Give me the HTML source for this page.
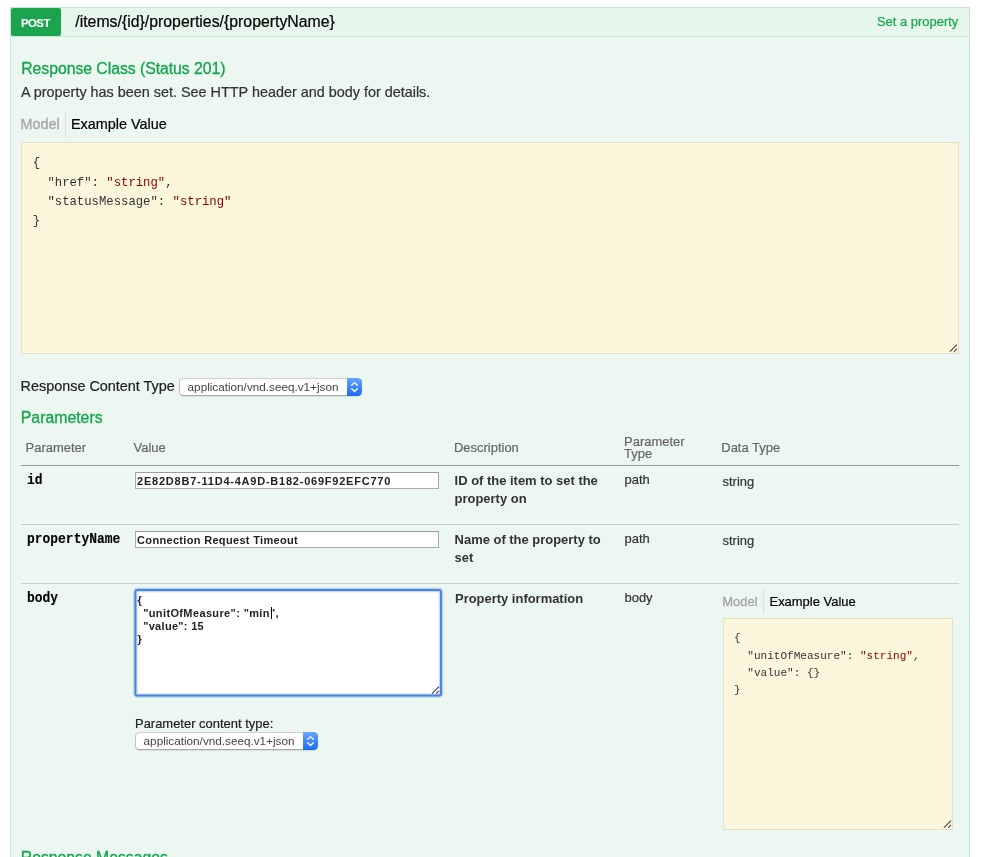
<!DOCTYPE html>
<html>
<head>
<meta charset="utf-8">
<title>Swagger UI</title>
<style>
html,body{margin:0;padding:0;background:#fff;}
body{width:982px;height:857px;overflow:hidden;position:relative;font-family:"Liberation Sans",sans-serif;line-height:1;}
.t{position:absolute;white-space:pre;line-height:1;-webkit-text-stroke-width:0.2px;}
#wrap{position:absolute;left:0;top:0;width:982px;height:857px;overflow:hidden;will-change:transform;}
.s{font-family:"Liberation Sans",sans-serif;}
.m{font-family:"Liberation Mono",monospace;}
.b{position:absolute;box-sizing:border-box;}
.str{color:#800;}
.sel{position:absolute;box-sizing:border-box;width:183px;height:18px;border:1px solid #c2c2c2;border-top-color:#cfcfcf;border-bottom-color:#a9a9a9;border-radius:4.5px;background:#fff;box-shadow:0 0.5px 1px rgba(0,0,0,0.10);}
.selbtn{position:absolute;right:-1px;top:-1px;width:15px;height:18px;border-radius:0 4.5px 4.5px 0;background:linear-gradient(#68a6fa,#1a6cf6);}
.selbtn svg{display:block;}
</style>
</head>
<body>
<div id="wrap">
<div class="b" style="left:10px;top:7px;width:960px;height:30px;border:1px solid #c3e8d1;background:#e7f6ec;"></div>
<div class="b" style="left:10px;top:37px;width:960px;height:863px;border:1px solid #c3e8d1;border-top:none;background:#ebf7f0;"></div>
<div class="b" style="left:11px;top:8px;width:50px;height:28px;background:#1ba34e;border-radius:2px;"></div>
<div class="t s" style="top:18px;font-size:11.4px;color:#fff;left:0.00px;font-weight:bold;letter-spacing:-0.5px;-webkit-text-stroke-width:0.1px;width:50px;text-align:center;left:10.4px;">POST</div>
<div class="t s" style="top:14px;font-size:15.84px;color:#000;left:75.30px;">/items/{id}/properties/{propertyName}</div>
<div class="t s" style="top:16px;font-size:12.96px;color:#15a44c;right:23.70px;">Set a property</div>
<div class="t s" style="top:61px;font-size:15.84px;color:#15a44c;left:21.20px;letter-spacing:-0.06px;-webkit-text-stroke-width:0.3px;">Response Class (Status 201)</div>
<div class="t s" style="top:85px;font-size:14.4px;color:#333;left:21.00px;">A property has been set. See HTTP header and body for details.</div>
<div class="t s" style="top:117px;font-size:14.4px;color:#a6a6a6;left:20.40px;-webkit-text-stroke-width:0.3px;">Model</div>
<div class="b" style="left:65px;top:112px;width:1px;height:25px;background:#ddd;"></div>
<div class="t s" style="top:117px;font-size:14.4px;color:#000;left:71.00px;">Example Value</div>
<div class="b" style="left:21px;top:142px;width:938px;height:212px;border:1px solid #e5e0c6;background:#fcf6dc;"></div>
<div class="t m" style="top:157px;font-size:12.28px;color:#333;left:32.70px;-webkit-text-stroke-width:0px;transform:scaleY(1.07);transform-origin:0 9px;">{</div>
<div class="t m" style="top:177px;font-size:12.28px;color:#333;left:32.70px;-webkit-text-stroke-width:0px;transform:scaleY(1.07);transform-origin:0 9px;">  "href": <span class="str">"string"</span>,</div>
<div class="t m" style="top:196px;font-size:12.28px;color:#333;left:32.70px;-webkit-text-stroke-width:0px;transform:scaleY(1.07);transform-origin:0 9px;">  "statusMessage": <span class="str">"string"</span></div>
<div class="t m" style="top:215px;font-size:12.28px;color:#333;left:32.70px;-webkit-text-stroke-width:0px;transform:scaleY(1.07);transform-origin:0 9px;">}</div>
<svg class="b" style="left:948px;top:343px" width="10" height="10"><path d="M1.9 8.7L9 1.6M6.1 8.7L9 5.8" stroke="#444" stroke-width="1.1" fill="none"/></svg>
<div class="t s" style="top:379px;font-size:14.4px;color:#222;left:20.60px;">Response Content Type</div>
<div class="sel" style="left:179px;top:378px;"><div class="selbtn"><svg width="15" height="18" viewBox="0 0 15 18"><path d="M4.7 7.3L7.5 4.6L10.3 7.3M4.7 10.8L7.5 13.5L10.3 10.8" stroke="#fff" stroke-width="1.3" fill="none" stroke-linecap="round" stroke-linejoin="round"/></svg></div></div>
<div class="t s" style="top:381px;font-size:11.73px;color:#444;left:187.60px;-webkit-text-stroke-width:0px;">application/vnd.seeq.v1+json</div>
<div class="t s" style="top:410px;font-size:15.84px;color:#15a44c;left:20.80px;-webkit-text-stroke-width:0.3px;">Parameters</div>
<div class="t s" style="top:442px;font-size:12.96px;color:#666;left:25.60px;">Parameter</div>
<div class="t s" style="top:442px;font-size:12.96px;color:#666;left:133.60px;">Value</div>
<div class="t s" style="top:442px;font-size:12.96px;color:#666;left:454.00px;">Description</div>
<div class="t s" style="top:436px;font-size:12.96px;color:#666;left:624.10px;">Parameter</div>
<div class="t s" style="top:448px;font-size:12.96px;color:#666;left:624.10px;">Type</div>
<div class="t s" style="top:442px;font-size:12.96px;color:#666;left:721.30px;">Data Type</div>
<div class="b" style="left:21px;top:465px;width:938px;height:1px;background:#999;"></div>
<div class="t m" style="top:475px;font-size:12.96px;color:#000;left:27.00px;font-weight:bold;-webkit-text-stroke-width:0.1px;transform:scaleY(1.1);transform-origin:0 9px;">id</div>
<div class="b" style="left:135px;top:472px;width:304px;height:17px;border:1px solid #aaa;border-top-color:#9c9c9c;background:#fff;"></div>
<div class="t s" style="top:476px;font-size:11px;color:#222;left:137.10px;font-weight:bold;letter-spacing:0.77px;-webkit-text-stroke-width:0px;">2E82D8B7-11D4-4A9D-B182-069F92EFC770</div>
<div class="t s" style="top:475px;font-size:12.96px;color:#333;left:454.60px;font-weight:bold;-webkit-text-stroke-width:0px;">ID of the item to set the</div>
<div class="t s" style="top:493px;font-size:12.96px;color:#333;left:454.60px;font-weight:bold;-webkit-text-stroke-width:0px;">property on</div>
<div class="t s" style="top:474px;font-size:12.96px;color:#333;left:624.50px;">path</div>
<div class="t s" style="top:476px;font-size:12.96px;color:#333;left:722.50px;">string</div>
<div class="b" style="left:21px;top:524px;width:938px;height:1px;background:#ccc;"></div>
<div class="t m" style="top:534px;font-size:12.96px;color:#000;left:27.00px;font-weight:bold;-webkit-text-stroke-width:0.1px;transform:scaleY(1.1);transform-origin:0 9px;">propertyName</div>
<div class="b" style="left:135px;top:531px;width:304px;height:17px;border:1px solid #aaa;border-top-color:#9c9c9c;background:#fff;"></div>
<div class="t s" style="top:535px;font-size:11px;color:#222;left:137.10px;font-weight:bold;letter-spacing:0.32px;-webkit-text-stroke-width:0px;">Connection Request Timeout</div>
<div class="t s" style="top:534px;font-size:12.96px;color:#333;left:454.60px;font-weight:bold;-webkit-text-stroke-width:0px;">Name of the property to</div>
<div class="t s" style="top:552px;font-size:12.96px;color:#333;left:454.60px;font-weight:bold;-webkit-text-stroke-width:0px;">set</div>
<div class="t s" style="top:533px;font-size:12.96px;color:#333;left:624.50px;">path</div>
<div class="t s" style="top:535px;font-size:12.96px;color:#333;left:722.50px;">string</div>
<div class="b" style="left:21px;top:583px;width:938px;height:1px;background:#ccc;"></div>
<div class="t m" style="top:593px;font-size:12.96px;color:#000;left:27.00px;font-weight:bold;-webkit-text-stroke-width:0.1px;transform:scaleY(1.1);transform-origin:0 9px;">body</div>
<svg class="b" style="left:130px;top:585px" width="320" height="120"><rect x="5.4" y="5" width="305.6" height="105.6" rx="2.2" fill="#fff" stroke="#4a86e0" stroke-opacity="0.3" stroke-width="4.4"/><rect x="5.4" y="5" width="305.6" height="105.6" rx="2.2" fill="none" stroke="#4a86e0" stroke-width="2.0"/></svg>
<div class="t s" style="top:595px;font-size:11px;color:#222;left:137.50px;font-weight:bold;letter-spacing:0.4px;-webkit-text-stroke-width:0px;">{</div>
<div class="t s" style="top:608px;font-size:11px;color:#222;left:143.20px;font-weight:bold;letter-spacing:0.37px;-webkit-text-stroke-width:0px;">"unitOfMeasure": "min",</div>
<div class="t s" style="top:621px;font-size:11px;color:#222;left:143.20px;font-weight:bold;letter-spacing:0.3px;-webkit-text-stroke-width:0px;">"value": 15</div>
<div class="t s" style="top:634px;font-size:11px;color:#222;left:137.50px;font-weight:bold;letter-spacing:0.4px;-webkit-text-stroke-width:0px;">}</div>
<div class="b" style="left:271px;top:607px;width:1px;height:12px;background:#000;"></div>
<svg class="b" style="left:430px;top:685px" width="10" height="10"><path d="M1.9 8.7L9 1.6M6.1 8.7L9 5.8" stroke="#444" stroke-width="1.1" fill="none"/></svg>
<div class="t s" style="top:593px;font-size:12.96px;color:#333;left:455.00px;font-weight:bold;-webkit-text-stroke-width:0px;">Property information</div>
<div class="t s" style="top:592px;font-size:12.96px;color:#333;left:624.50px;">body</div>
<div class="t s" style="top:596px;font-size:12.96px;color:#a6a6a6;left:722.30px;-webkit-text-stroke-width:0.3px;">Model</div>
<div class="b" style="left:763px;top:590px;width:1px;height:23px;background:#ddd;"></div>
<div class="t s" style="top:596px;font-size:12.96px;color:#000;left:769.50px;">Example Value</div>
<div class="b" style="left:723px;top:618px;width:230px;height:212px;border:1px solid #e5e0c6;background:#fcf6dc;"></div>
<div class="t m" style="top:633px;font-size:11.05px;color:#333;left:734.00px;-webkit-text-stroke-width:0px;transform:scaleY(1.07);transform-origin:0 8px;">{</div>
<div class="t m" style="top:651px;font-size:11.05px;color:#333;left:734.00px;-webkit-text-stroke-width:0px;transform:scaleY(1.07);transform-origin:0 8px;">  "unitOfMeasure": <span class="str">"string"</span>,</div>
<div class="t m" style="top:668px;font-size:11.05px;color:#333;left:734.00px;-webkit-text-stroke-width:0px;transform:scaleY(1.07);transform-origin:0 8px;">  "value": {}</div>
<div class="t m" style="top:685px;font-size:11.05px;color:#333;left:734.00px;-webkit-text-stroke-width:0px;transform:scaleY(1.07);transform-origin:0 8px;">}</div>
<svg class="b" style="left:942px;top:819px" width="10" height="10"><path d="M1.9 8.7L9 1.6M6.1 8.7L9 5.8" stroke="#444" stroke-width="1.1" fill="none"/></svg>
<div class="t s" style="top:718px;font-size:12.96px;color:#222;left:135.00px;">Parameter content type:</div>
<div class="sel" style="left:135px;top:732px;"><div class="selbtn"><svg width="15" height="18" viewBox="0 0 15 18"><path d="M4.7 7.3L7.5 4.6L10.3 7.3M4.7 10.8L7.5 13.5L10.3 10.8" stroke="#fff" stroke-width="1.3" fill="none" stroke-linecap="round" stroke-linejoin="round"/></svg></div></div>
<div class="t s" style="top:735px;font-size:11.73px;color:#444;left:143.60px;-webkit-text-stroke-width:0px;">application/vnd.seeq.v1+json</div>
<div class="t s" style="top:850px;font-size:15.84px;color:#15a44c;left:20.80px;letter-spacing:-0.05px;-webkit-text-stroke-width:0.3px;">Response Messages</div>
</div>
</body>
</html>
